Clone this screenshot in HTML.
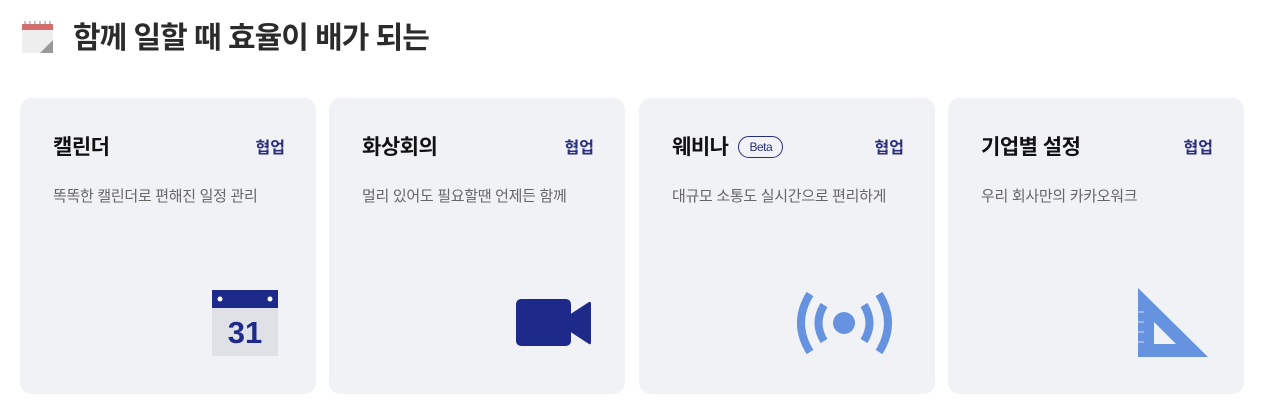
<!DOCTYPE html>
<html><head><meta charset="utf-8"><style>
body{margin:0;width:1267px;height:413px;background:#fff;font-family:"Liberation Sans","Noto Sans CJK KR",sans-serif;position:relative;overflow:hidden}
h1{position:absolute;left:73px;top:13px;margin:0;font-size:30px;font-weight:700;color:#2b2b2b;letter-spacing:-1px}
.card{position:absolute;top:98px;width:296px;height:296px;background:#f1f2f6;border-radius:12px}
.t{position:absolute;left:33px;top:33px;font-size:21px;font-weight:700;color:#111;letter-spacing:-0.5px}
.tag{position:absolute;right:31px;top:36px;font-size:16px;font-weight:700;color:#2a2f7c}
.d{position:absolute;left:33px;top:87px;font-size:15px;color:#666;letter-spacing:-0.3px}
.beta{display:inline-block;vertical-align:3px;margin-left:10px;border:1.5px solid #2a2f7c;border-radius:12px;font-size:12px;font-weight:400;padding:3px 10px;color:#2a2f7c}
svg{position:absolute}
</style></head><body>
<svg style="left:22px;top:20px" width="32" height="34" viewBox="0 0 32 34"><rect x="0" y="4" width="31" height="29" fill="#eee"/><rect x="0" y="4" width="31" height="6" fill="#d86b6b"/><g stroke="#888" stroke-width="1"><line x1="3" y1="1" x2="3" y2="5"/><line x1="8" y1="1" x2="8" y2="5"/><line x1="13" y1="1" x2="13" y2="5"/><line x1="18" y1="1" x2="18" y2="5"/><line x1="23" y1="1" x2="23" y2="5"/><line x1="28" y1="1" x2="28" y2="5"/></g><path d="M18 33 L31 20 L31 33Z" fill="#999"/></svg>
<h1>함께 일할 때 효율이 배가 되는</h1>
<div class="card" style="left:20px"><div class="t">캘린더</div><div class="tag">협업</div><div class="d">똑똑한 캘린더로 편해진 일정 관리</div></div>
<div class="card" style="left:329px"><div class="t">화상회의</div><div class="tag">협업</div><div class="d">멀리 있어도 필요할땐 언제든 함께</div></div>
<div class="card" style="left:639px"><div class="t">웨비나<span class="beta">Beta</span></div><div class="tag">협업</div><div class="d">대규모 소통도 실시간으로 편리하게</div></div>
<div class="card" style="left:948px"><div class="t">기업별 설정</div><div class="tag">협업</div><div class="d">우리 회사만의 카카오워크</div></div>
<svg style="left:212px;top:290px" width="66" height="66"><rect x="0" y="0" width="66" height="66" fill="#e0e1e6"/><rect x="0" y="0" width="66" height="18" fill="#1e2a8a"/><circle cx="8" cy="9" r="2.5" fill="#fff"/><circle cx="58" cy="9" r="2.5" fill="#fff"/><text x="33" y="53" text-anchor="middle" font-family="Liberation Sans" font-weight="700" font-size="31" fill="#1e2a8a">31</text></svg>
<svg style="left:516px;top:299px" width="76" height="48"><rect x="0" y="0" width="55" height="47" rx="5" fill="#1e2a8a"/><path d="M50 18 L73 3 Q75 2 75 5 L75 43 Q75 46 73 45 L50 30Z" fill="#1e2a8a"/></svg>
<svg style="left:797px;top:290px" width="95" height="66" viewBox="0 0 95 66"><circle cx="47" cy="33" r="11" fill="#6593e0"/><g fill="none" stroke="#6593e0" stroke-width="8"><path d="M13 4 Q-5 33 13 62"/><path d="M82 4 Q100 33 82 62"/><path d="M27 15 Q16 33 27 51"/><path d="M67 15 Q78 33 67 51"/></g></svg>
<svg style="left:1138px;top:288px" width="72" height="70"><path d="M0 0 L70 69 L0 69Z" fill="#6593e0"/><path d="M16 34 L38 56 L16 56Z" fill="#f1f2f6"/><g stroke="#a9c1ee" stroke-width="1.5"><line x1="0" y1="24" x2="6" y2="24"/><line x1="0" y1="34" x2="6" y2="34"/><line x1="0" y1="44" x2="6" y2="44"/><line x1="0" y1="54" x2="6" y2="54"/></g></svg>
</body></html>
